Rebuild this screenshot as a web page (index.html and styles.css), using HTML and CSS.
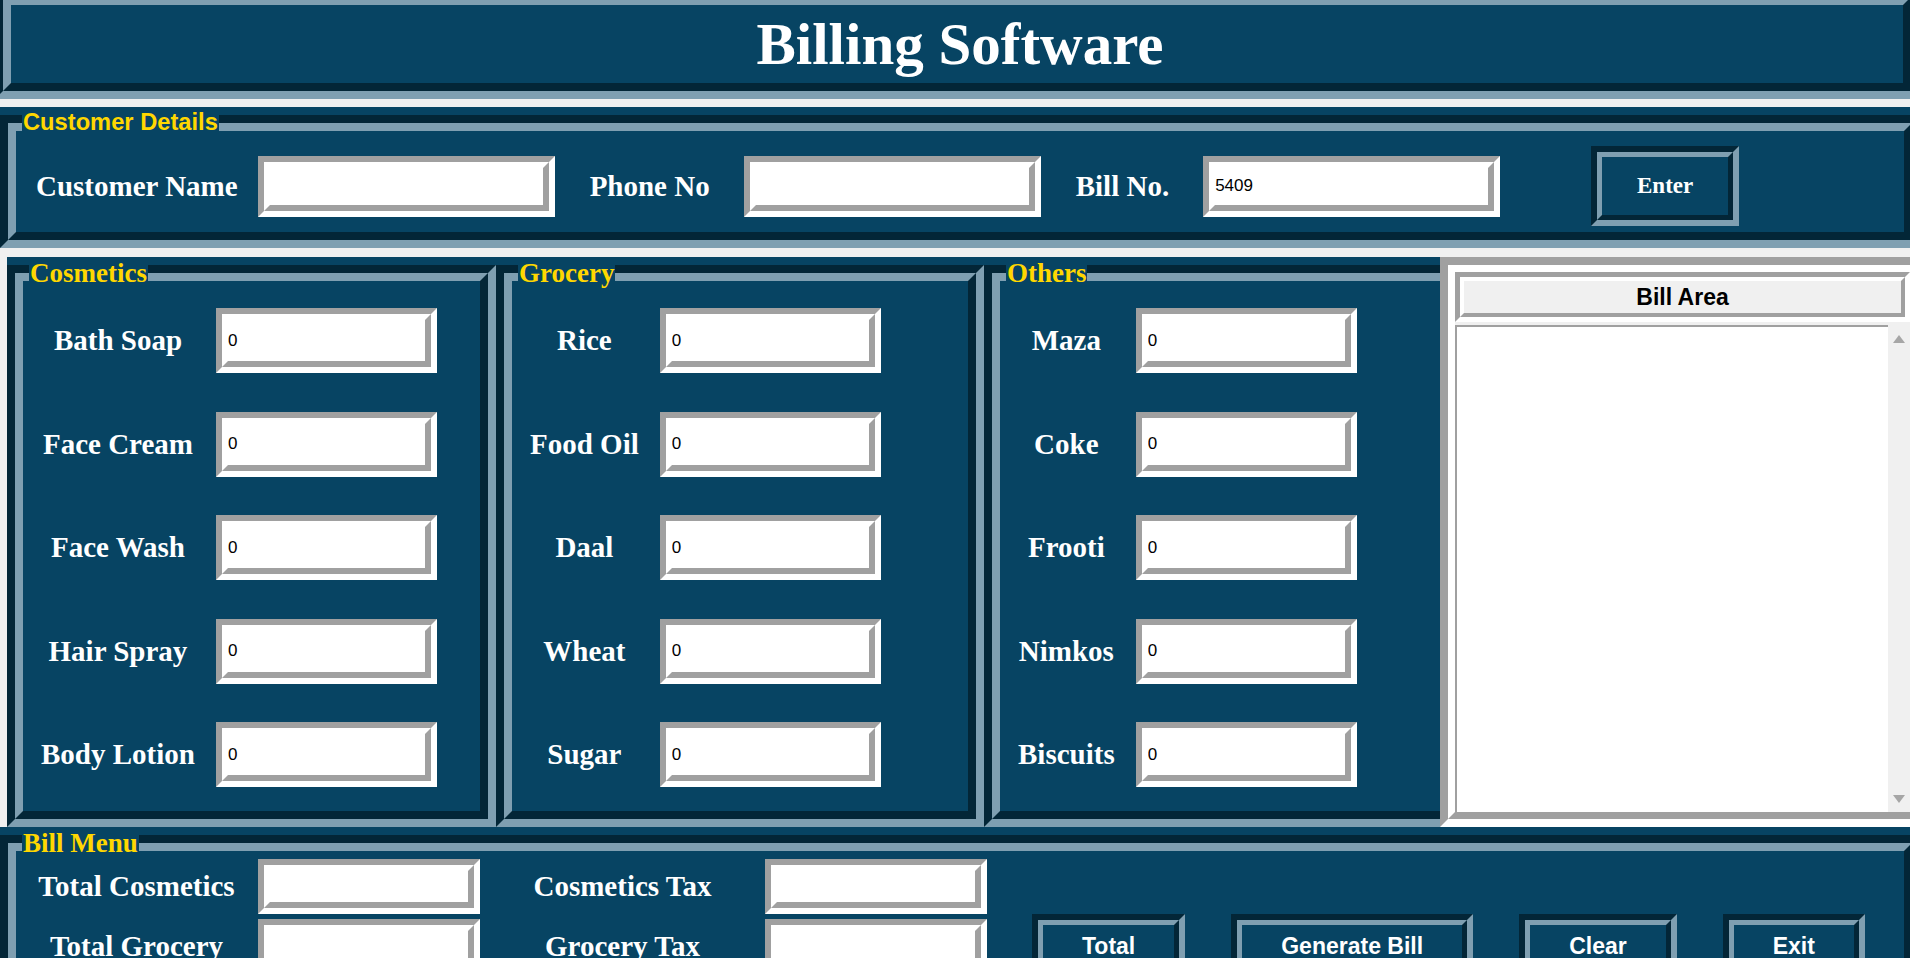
FILE: index.html
```html
<!DOCTYPE html>
<html lang="en">
<head>
<meta charset="utf-8">
<title>Billing Software</title>
<link rel="stylesheet" href="styles.css">
</head>
<body>
<div class="app">
  <header class="title groove">
    <div class="groove-in title-in"><h1>Billing Software</h1></div>
  </header>

  <section class="lframe cust">
    <span class="legend legend-sans">Customer Details</span>
    <div class="groove"><div class="groove-in cust-row">
      <span class="lbl cust-lbl first">Customer Name</span>
      <span class="entry e-cust"><input type="text" value=""></span>
      <span class="lbl cust-lbl">Phone No</span>
      <span class="entry e-cust"><input type="text" value=""></span>
      <span class="lbl cust-lbl">Bill No.</span>
      <span class="entry e-cust"><input type="text" value="5409"></span>
      <button class="btn btn-enter" type="button"><span>Enter</span></button>
    </div></div>
  </section>

  <div class="products">
    <section class="lframe prod prod-cos">
      <span class="legend">Cosmetics</span>
      <div class="groove"><div class="groove-in prod-grid">
        <span class="lbl">Bath Soap</span><span class="entry e-prod"><input type="text" value="0"></span>
        <span class="lbl">Face Cream</span><span class="entry e-prod"><input type="text" value="0"></span>
        <span class="lbl">Face Wash</span><span class="entry e-prod"><input type="text" value="0"></span>
        <span class="lbl">Hair Spray</span><span class="entry e-prod"><input type="text" value="0"></span>
        <span class="lbl">Body Lotion</span><span class="entry e-prod"><input type="text" value="0"></span>
      </div></div>
    </section>

    <section class="lframe prod prod-gro">
      <span class="legend">Grocery</span>
      <div class="groove"><div class="groove-in prod-grid">
        <span class="lbl">Rice</span><span class="entry e-prod"><input type="text" value="0"></span>
        <span class="lbl">Food Oil</span><span class="entry e-prod"><input type="text" value="0"></span>
        <span class="lbl">Daal</span><span class="entry e-prod"><input type="text" value="0"></span>
        <span class="lbl">Wheat</span><span class="entry e-prod"><input type="text" value="0"></span>
        <span class="lbl">Sugar</span><span class="entry e-prod"><input type="text" value="0"></span>
      </div></div>
    </section>

    <section class="lframe prod prod-oth">
      <span class="legend">Others</span>
      <div class="groove"><div class="groove-in prod-grid">
        <span class="lbl">Maza</span><span class="entry e-prod"><input type="text" value="0"></span>
        <span class="lbl">Coke</span><span class="entry e-prod"><input type="text" value="0"></span>
        <span class="lbl">Frooti</span><span class="entry e-prod"><input type="text" value="0"></span>
        <span class="lbl">Nimkos</span><span class="entry e-prod"><input type="text" value="0"></span>
        <span class="lbl">Biscuits</span><span class="entry e-prod"><input type="text" value="0"></span>
      </div></div>
    </section>

    <section class="billarea">
      <div class="bill-in">
        <div class="bill-title"><div class="bill-title-in">Bill Area</div></div>
        <div class="bill-body">
          <div class="txtarea"></div>
          <div class="scrollbar">
            <svg class="arrow" width="12" height="8" viewBox="0 0 12 8"><polygon points="6,0 12,8 0,8" fill="#a6a6a6"/></svg>
            <svg class="arrow" width="12" height="8" viewBox="0 0 12 8"><polygon points="0,0 12,0 6,8" fill="#a6a6a6"/></svg>
          </div>
        </div>
      </div>
    </section>
  </div>

  <section class="lframe menu">
    <span class="legend">Bill Menu</span>
    <div class="groove"><div class="groove-in menu-row">
      <div class="menu-grid">
        <span class="lbl">Total Cosmetics</span><span class="entry e-menu"><input type="text" value=""></span>
        <span class="lbl">Cosmetics Tax</span><span class="entry e-menu"><input type="text" value=""></span>
        <span class="lbl">Total Grocery</span><span class="entry e-menu"><input type="text" value=""></span>
        <span class="lbl">Grocery Tax</span><span class="entry e-menu"><input type="text" value=""></span>
      </div>
      <div class="btns">
        <button class="btn btn-menu" type="button"><span>Total</span></button>
        <button class="btn btn-menu" type="button"><span>Generate Bill</span></button>
        <button class="btn btn-menu" type="button"><span>Clear</span></button>
        <button class="btn btn-menu" type="button"><span>Exit</span></button>
      </div>
    </div></div>
  </section>
</div>
</body>
</html>
```

FILE: styles.css
```css
* { box-sizing: border-box; }

html, body {
  margin: 0;
  padding: 0;
}

body {
  background: #f0f0f0;
  width: 1910px;
  height: 958px;
  overflow: hidden;
  font-family: "Liberation Serif", "Times New Roman", serif;
}

.app {
  width: 1910px;
  height: 958px;
  overflow: hidden;
}

/* groove border, two halves */
.groove {
  display: flex;
  flex-direction: column;
  border: 8px solid;
  border-color: #032637 #7f9fb1 #7f9fb1 #032637;
}

.groove-in {
  flex: 1;
  border: 8px solid;
  border-color: #7f9fb1 #032637 #032637 #7f9fb1;
  background: #074463;
}

/* title */
.title {
  width: 1924px;
  height: 110px;
  margin: -11px 0 0 -5px;
  background: #074463;
}

.title h1 {
  margin: 0;
  padding-left: 6px;
  color: #fff;
  font: bold 59px/78px "Liberation Serif", "Times New Roman", serif;
  text-align: center;
}

/* label frames */
.lframe {
  position: relative;
  display: flex;
  flex-direction: column;
  flex-shrink: 0;
  padding-top: 8px;
  background: #074463;
}

.lframe > .groove { flex: 1; }

.legend {
  position: absolute;
  top: 2px;
  left: 22px;
  padding: 0 1px;
  background: #074463;
  color: #ffd700;
  font: bold 27px/28px "Liberation Serif", "Times New Roman", serif;
  white-space: nowrap;
}

.legend-sans {
  font: bold 23.7px/26px "Liberation Sans", Arial, sans-serif;
}

.lbl {
  color: #fff;
  font: bold 29px "Liberation Serif", "Times New Roman", serif;
  white-space: nowrap;
  text-align: center;
}

/* entries */
.entry {
  display: block;
  flex-shrink: 0;
  border: 6px solid;
  border-color: #a0a0a0 #fff #fff #a0a0a0;
  background: #fff;
}

.entry input {
  display: block;
  width: 100%;
  height: 100%;
  margin: 0;
  padding: 0;
  border: 6px solid;
  border-color: #fff #a0a0a0 #a0a0a0 #fff;
  background: #fff;
  color: #000;
  font: 17px "Liberation Sans", Arial, sans-serif;
  outline: none;
}

.e-cust { width: 297px; height: 61px; }
.e-prod { width: 221px; height: 65px; }
.e-menu { width: 222px; height: 55px; }

/* buttons */
.btn {
  display: block;
  flex-shrink: 0;
  margin: 0;
  padding: 0;
  border: 6px solid;
  border-color: #032637 #7f9fb1 #7f9fb1 #032637;
  background: #074463;
  color: #fff;
  cursor: pointer;
}

.btn > span {
  display: block;
  border: 5px solid;
  border-color: #7f9fb1 #032637 #032637 #7f9fb1;
}

.btn-enter {
  width: 148px;
  height: 80px;
  margin-left: 91px;
}

.btn-enter > span {
  height: 100%;
  display: flex;
  align-items: center;
  justify-content: center;
  font: bold 23px "Liberation Serif", "Times New Roman", serif;
}

.btn-menu > span {
  padding: 8px 39px 14px;
  font: bold 23px "Liberation Sans", Arial, sans-serif;
  white-space: nowrap;
}

/* customer details */
.cust {
  width: 1920px;
  height: 141px;
  margin-top: 8px;
}

.cust-row {
  display: flex;
  align-items: center;
  padding-top: 9px;
}

.cust-lbl {
  margin: 0 34px 0 35px;
}

.cust-lbl.first {
  margin: 0 20px 0 20px;
}

/* products */
.products {
  display: flex;
  width: 1930px;
  height: 570px;
  margin-top: 9px;
  padding-left: 7px;
}

.prod-cos { width: 489px; }
.prod-gro { width: 488px; }
.prod-oth { width: 456px; }

.prod-oth .groove,
.prod-oth .groove-in {
  border-right-width: 0;
}

.prod-grid {
  display: grid;
  grid-template-columns: auto 221px;
  grid-auto-rows: 65px;
  column-gap: 3px;
  row-gap: 38.5px;
  align-items: center;
  align-content: start;
  justify-content: start;
  padding-top: 27px;
}

.prod-grid .lbl {
  padding: 0 18px;
}

/* bill area */
.billarea {
  flex-shrink: 0;
  width: 485px;
  height: 570px;
  border: 8px solid;
  border-color: #a0a0a0 #fff #fff #a0a0a0;
}

.bill-in {
  display: flex;
  flex-direction: column;
  height: 100%;
  border: 7px solid;
  border-color: #fff #a0a0a0 #a0a0a0 #fff;
  background: #f0f0f0;
}

.bill-title {
  height: 50px;
  border: 5px solid;
  border-color: #a0a0a0 #fff #fff #a0a0a0;
}

.bill-title-in {
  height: 100%;
  border: 4px solid;
  border-color: #fff #a0a0a0 #a0a0a0 #fff;
  background: #f0f0f0;
  color: #000;
  font: bold 23px/32px "Liberation Sans", Arial, sans-serif;
  text-align: center;
}

.bill-body {
  flex: 1;
  display: flex;
  margin-top: 3px;
}

.txtarea {
  flex: 1;
  background: #fff;
  border-top: 2px solid #a0a0a0;
  border-left: 2px solid #a0a0a0;
}

.scrollbar {
  width: 22px;
  display: flex;
  flex-direction: column;
  justify-content: space-between;
  align-items: center;
  padding: 10px 0 9px;
  background: #f0f0f0;
}

.arrow { display: block; }

/* bill menu */
.menu {
  width: 1920px;
  height: 200px;
}

.menu-row {
  display: flex;
  align-items: flex-start;
  padding-top: 8px;
}

.menu-grid {
  display: grid;
  grid-template-columns: 241px 222px 283px 222px;
  grid-auto-rows: 55px;
  column-gap: 1px;
  row-gap: 5px;
  align-items: center;
}

.btns {
  display: flex;
  gap: 46px;
  margin: 55px 0 0 45px;
}
```
